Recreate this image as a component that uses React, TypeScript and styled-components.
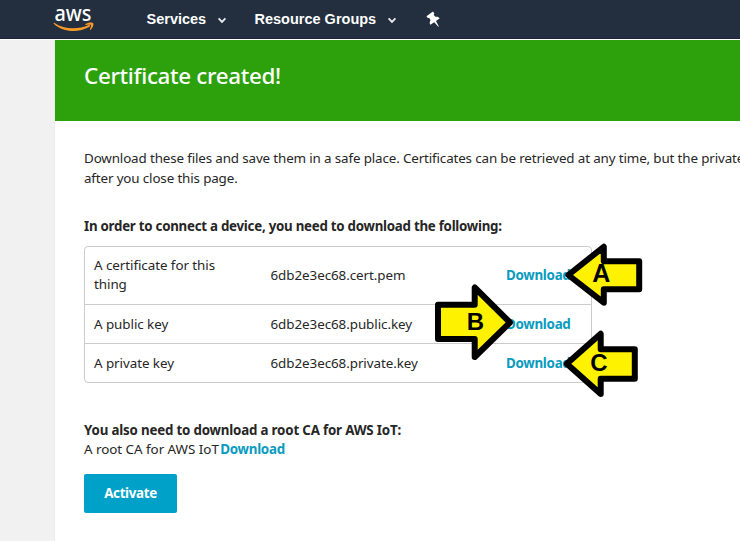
import React from "react";
import styled, { createGlobalStyle } from "styled-components";

const GlobalStyle = createGlobalStyle`
  *, *::before, *::after { box-sizing: border-box; }
  body {
    margin: 0;
    overflow: hidden;
    background: #fff;
    font: 13.4px/19.5px "Noto Sans", "Open Sans", sans-serif;
    color: #262626;
  }
`;

const Page = styled.div`
  position: relative;
  display: flex;
  flex-direction: column;
  width: 740px;
  height: 541px;
  overflow: hidden;
`;

const TopBar = styled.header`
  display: flex;
  align-items: center;
  flex: none;
  height: 39px;
  padding-left: 53px;
  background: #232f3e;
  border-bottom: 1px solid #1d2340;
`;

const Logo = styled.svg`
  display: block;
  flex: none;
  width: 42px;
  height: 38px;
  margin-right: 51.5px;
  overflow: visible;
`;

const LogoText = styled.text`
  font: 500 21.3px "Noto Sans", sans-serif;
  fill: #fff;
`;

const NavItem = styled.a<{ $width: number }>`
  display: flex;
  align-items: center;
  gap: 11px;
  width: ${(p) => p.$width}px;
  font: bold 14.5px/20px "Liberation Sans", Arial, sans-serif;
  color: #fff;
  white-space: nowrap;
`;

const ChevronIcon = styled.svg`
  width: 10px;
  height: 7px;
  margin-top: 3px;
`;

const PinIcon = styled.svg`
  width: 16px;
  height: 18px;
  margin-top: 1px;
`;

const Body = styled.div`
  display: flex;
  flex: 1;
  margin-top: 1px;
`;

const SideRail = styled.aside`
  flex: none;
  width: 55px;
  background: #f1f1f1;
  border-right: 1px solid #ececec;
`;

const Content = styled.main`
  flex: none;
  width: 685px;
  overflow: hidden;
`;

const Banner = styled.div`
  height: 81px;
  padding: 20px 29px;
  background: #2ca10c;
`;

const Title = styled.h1`
  margin: 0;
  font-size: 22.4px;
  font-weight: 500;
  line-height: 32px;
  letter-spacing: -0.33px;
  color: #fff;
`;

const Panel = styled.section`
  padding: 28px 0 0 29px;
`;

const Line = styled.p<{ $tracking: number }>`
  margin: 0;
  white-space: nowrap;
  letter-spacing: ${(p) => p.$tracking}px;
`;

const Heading = styled.h2<{ $top: number; $tracking: number }>`
  margin: ${(p) => p.$top}px 0 0;
  font-size: 13.3px;
  font-weight: 700;
  line-height: 19.5px;
  letter-spacing: ${(p) => p.$tracking}px;
  white-space: nowrap;
`;

const FileTable = styled.div`
  width: 508px;
  margin-top: 9.5px;
  border: 1px solid #ccc;
  border-radius: 4px;
`;

const FileRow = styled.div`
  display: grid;
  grid-template-columns: 176.5px 235.5px 1fr;
  align-items: center;
  padding: 8.8px 0 9.4px 9px;
  letter-spacing: -0.06px;

  & + & {
    padding: 9.7px 0 8.5px 9px;
    border-top: 1px solid #ccc;
  }
`;

const FileLabel = styled.span`
  max-width: 135px;
`;

const FileName = styled.span`
  white-space: nowrap;
`;

const Download = styled.a`
  font-weight: 700;
  letter-spacing: -0.3px;
  color: #0a9bc0;
`;

const InlineDownload = styled(Download)`
  margin-left: 1.5px;
`;

const ActivateButton = styled.button`
  display: block;
  width: 93px;
  height: 39px;
  margin-top: 14px;
  padding: 0;
  border: 0;
  border-radius: 2px;
  background: #00a1c9;
  color: #fff;
  font: 700 13.4px/19px "Noto Sans", sans-serif;
  letter-spacing: -0.35px;
`;

const Callouts = styled.svg`
  position: absolute;
  left: 0;
  top: 0;
  width: 740px;
  height: 541px;
  pointer-events: none;
`;

const Arrow = styled.polygon`
  fill: #fff200;
  stroke: #000;
  stroke-width: 6px;
  stroke-linejoin: round;
`;

const ArrowLetter = styled.text<{ $size: number }>`
  font: bold ${(p) => p.$size}px "Liberation Sans", Arial, sans-serif;
  fill: #000;
  text-anchor: middle;
`;

const files = [
  { label: "A certificate for this thing", name: "6db2e3ec68.cert.pem" },
  { label: "A public key", name: "6db2e3ec68.public.key" },
  { label: "A private key", name: "6db2e3ec68.private.key" },
];

const callouts = [
  { letter: "A", x: 601.2, y: 282.3, size: 25, points: "568.3,275 603.8,246.8 603.8,261.3 639.2,261.3 639.2,289.2 603.8,289.2 603.8,302.7" },
  { letter: "B", x: 475.5, y: 330, size: 24, points: "510,322.5 474.7,287.5 474.7,304.7 438,304.7 438,339 474.7,339 474.7,357" },
  { letter: "C", x: 599, y: 371.3, size: 24, points: "566.8,363.8 600.7,333.8 600.7,349.2 634.8,349.2 634.8,378.8 600.7,378.8 600.7,394" },
];

function Chevron() {
  return (
    <ChevronIcon viewBox="0 0 10 7">
      <path d="M1.6 1.4 5 4.8 8.4 1.4" fill="none" stroke="#e8eaed" strokeWidth="1.9" />
    </ChevronIcon>
  );
}

export default function App() {
  return (
    <Page>
      <GlobalStyle />
      <TopBar>
        <Logo viewBox="0 0 42 38">
          <LogoText x="1.4" y="20.8" textLength="37" lengthAdjust="spacingAndGlyphs">
            aws
          </LogoText>
          <path
            d="M1.600 22.900C11 29.400 24.500 30 35.700 25c1.300-.5 2.100.9.900 1.800C25.500 33.200 10 32.600 1 24.100c-.8-.8-.3-1.700.6-1.200z"
            fill="#f79a28"
          />
          <path
            d="M32.400 24.300C34.600 22.300 39.400 22.100 40.200 23.200c.8 1.100-.4 4.800-2.600 6.600-.5.400-1 .1-.7-.5.700-1.600 1.500-3.700 1-4.300-.5-.6-3.100-.3-4.900 0-.7.1-1-.3-.6-.7z"
            fill="#f79a28"
          />
        </Logo>
        <NavItem $width={108}>
          Services
          <Chevron />
        </NavItem>
        <NavItem $width={171}>
          Resource Groups
          <Chevron />
        </NavItem>
        <PinIcon viewBox="0 0 16 18">
          <path
            transform="rotate(-35 8 9)"
            d="M4 1.500h8v2.400l-1.300.8.3 2.500c1.700.7 2.700 1.900 2.700 3.700H9.100L8.300 17h-.6l-.8-6.100H2.300c0-1.800 1-3 2.700-3.700l.3-2.500-1.300-.8z"
            fill="#fff"
          />
        </PinIcon>
      </TopBar>
      <Body>
        <SideRail />
        <Content>
          <Banner>
            <Title>Certificate created!</Title>
          </Banner>
          <Panel>
            <Line $tracking={-0.14}>
              Download these files and save them in a safe place. Certificates can be retrieved at any time, but the private
            </Line>
            <Line $tracking={-0.14}>after you close this page.</Line>
            <Heading $top={29} $tracking={-0.25}>
              In order to connect a device, you need to download the following:
            </Heading>
            <FileTable>
              {files.map((file) => (
                <FileRow key={file.name}>
                  <FileLabel>{file.label}</FileLabel>
                  <FileName>{file.name}</FileName>
                  <Download>Download</Download>
                </FileRow>
              ))}
            </FileTable>
            <Heading $top={38} $tracking={-0.17}>
              You also need to download a root CA for AWS IoT:
            </Heading>
            <Line $tracking={-0.03}>
              A root CA for AWS IoT
              <InlineDownload>Download</InlineDownload>
            </Line>
            <ActivateButton>Activate</ActivateButton>
          </Panel>
        </Content>
      </Body>
      <Callouts viewBox="0 0 740 541">
        {callouts.map((c) => (
          <g key={c.letter}>
            <Arrow points={c.points} />
            <ArrowLetter x={c.x} y={c.y} $size={c.size}>
              {c.letter}
            </ArrowLetter>
          </g>
        ))}
      </Callouts>
    </Page>
  );
}
